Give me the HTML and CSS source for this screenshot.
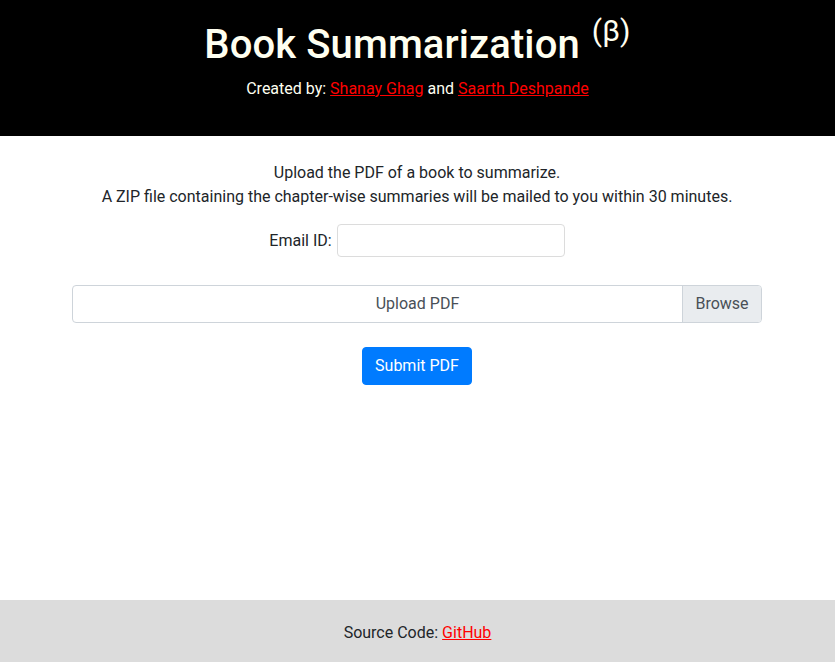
FILE: index.html
```html
<!DOCTYPE html>
<html lang="en">
<head>
<meta charset="utf-8">
<title>Book Summarization</title>
<link rel="stylesheet" href="styles.css">
</head>
<body>
<div class="page">
  <header class="hero">
    <h1 class="title">Book Summarization <sup class="beta">(β)</sup></h1>
    <p class="credits">Created by: <a href="#">Shanay Ghag</a> and <a href="#">Saarth Deshpande</a></p>
  </header>
  <main class="main">
    <div class="container">
      <p class="intro">Upload the PDF of a book to summarize.<br>A ZIP file containing the chapter-wise summaries will be mailed to you within 30 minutes.</p>
      <div class="email-row">
        <label class="email-label" for="email">Email ID:</label>
        <input class="email-input" id="email" type="email">
      </div>
      <div class="file-box">
        <span class="file-text">Upload PDF</span>
        <span class="file-btn">Browse</span>
      </div>
      <div class="submit-row">
        <button class="submit-btn" type="button">Submit PDF</button>
      </div>
    </div>
  </main>
  <footer class="footer">Source Code: <a href="#">GitHub</a></footer>
</div>
</body>
</html>
```
FILE: styles.css
```css
* { box-sizing: border-box; }
html, body { margin: 0; padding: 0; height: 100%; }
body {
  font-family: Roboto, "Noto Sans", sans-serif;
  font-size: 16px;
  line-height: 1.5;
  color: #212529;
  background: #fff;
}
.page {
  min-height: 662px;
  display: flex;
  flex-direction: column;
}
.hero {
  background: #000;
  text-align: center;
  padding: 21px 0 0;
  height: 136px;
}
.title {
  margin: 0 0 8px;
  font-size: 40px;
  font-weight: 500;
  line-height: 1.2;
  color: #fffff0;
  letter-spacing: 0.1px;
}
.beta {
  font-size: 30px;
  font-weight: 400;
  position: relative;
  top: -3px;
  vertical-align: super;
  line-height: 0;
  margin-left: 2px;
}
.credits {
  margin: 0;
  color: #fffff0;
}
a { color: #ff0000; text-decoration: underline; }
.main { flex: 1; }
.container {
  width: 690px;
  margin-left: calc(50% - 345.5px);
  padding-top: 25px;
}
.intro {
  text-align: center;
  margin: 0 0 15px;
}
.email-row {
  display: flex;
  justify-content: center;
  align-items: center;
  gap: 5px;
}
.email-input {
  width: 228px;
  height: 33px;
  border: 1px solid #dcdcdc;
  border-radius: 4px;
  font: inherit;
  padding: 2px 6px;
  margin: 0;
}
.file-box {
  margin-top: 28px;
  height: 38px;
  border: 1px solid #ced4da;
  border-radius: 4px;
  display: flex;
  overflow: hidden;
  color: #495057;
}
.file-text {
  flex: 1;
  text-align: center;
  line-height: 36px;
  padding-left: 80px;
}
.file-btn {
  width: 79px;
  background: #e9ecef;
  border-left: 1px solid #ced4da;
  text-align: center;
  line-height: 36px;
}
.submit-row {
  display: flex;
  justify-content: center;
  margin-top: 24px;
}
.submit-btn {
  font: inherit;
  color: #fff;
  background: #007bff;
  border: 1px solid #007bff;
  border-radius: 4px;
  padding: 6px 12px;
  line-height: 1.5;
  height: 38px;
}
.footer {
  background: #dcdcdc;
  height: 62px;
  padding-top: 3px;
  display: flex;
  justify-content: center;
  align-items: center;
  gap: 4px;
}
```
